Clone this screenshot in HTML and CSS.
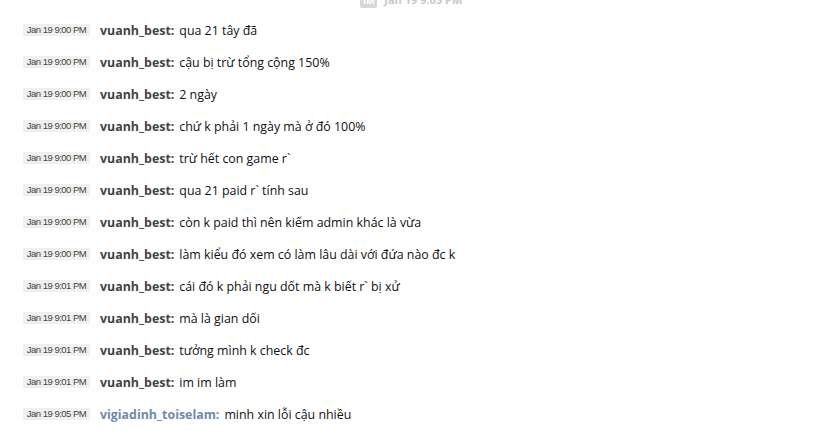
FILE: index.html
```html
<!DOCTYPE html>
<html>
    <head>
        <meta charset="utf-8">
        <link rel="stylesheet" href="styles.css">
    </head>
    <body>
        <div class='day-head'><span class='day-icon'>IM</span> Jan 19 9:05 PM</div>
        <div class='log'>
            <div class='line'><span class='stamp'>Jan 19 9:00 PM</span><span class='who'>vuanh_best:</span><span class='msg'>qua 21 tây đã</span></div>
            <div class='line'><span class='stamp'>Jan 19 9:00 PM</span><span class='who'>vuanh_best:</span><span class='msg'>cậu bị trừ tổng cộng 150%</span></div>
            <div class='line'><span class='stamp'>Jan 19 9:00 PM</span><span class='who'>vuanh_best:</span><span class='msg'>2 ngày</span></div>
            <div class='line'><span class='stamp'>Jan 19 9:00 PM</span><span class='who'>vuanh_best:</span><span class='msg'>chứ k phải 1 ngày mà ở đó 100%</span></div>
            <div class='line'><span class='stamp'>Jan 19 9:00 PM</span><span class='who'>vuanh_best:</span><span class='msg'>trừ hết con game r`</span></div>
            <div class='line'><span class='stamp'>Jan 19 9:00 PM</span><span class='who'>vuanh_best:</span><span class='msg'>qua 21 paid r` tính sau</span></div>
            <div class='line'><span class='stamp'>Jan 19 9:00 PM</span><span class='who'>vuanh_best:</span><span class='msg'>còn k paid thì nên kiếm admin khác là vừa</span></div>
            <div class='line'><span class='stamp'>Jan 19 9:00 PM</span><span class='who'>vuanh_best:</span><span class='msg'>làm kiểu đó xem có làm lâu dài với đứa nào đc k</span></div>
            <div class='line'><span class='stamp'>Jan 19 9:01 PM</span><span class='who'>vuanh_best:</span><span class='msg'>cái đó k phải ngu dốt mà k biết r` bị xử</span></div>
            <div class='line'><span class='stamp'>Jan 19 9:01 PM</span><span class='who'>vuanh_best:</span><span class='msg'>mà là gian dối</span></div>
            <div class='line'><span class='stamp'>Jan 19 9:01 PM</span><span class='who'>vuanh_best:</span><span class='msg'>tưởng mình k check đc</span></div>
            <div class='line'><span class='stamp'>Jan 19 9:01 PM</span><span class='who'>vuanh_best:</span><span class='msg'>im im làm</span></div>
            <div class='line'><span class='stamp'>Jan 19 9:05 PM</span><span class='who other'>vigiadinh_toiselam:</span><span class='msg'>minh xin lỗi cậu nhiều</span></div>
        </div>
    </body>
</html>
```

FILE: styles.css
```css
html {
    box-sizing: border-box;
}
*, *:before, *:after {
    box-sizing: inherit;
}

body {
    margin: 0;
    background-color: white;
    font-family: "Open Sans", "Noto Sans", sans-serif;
    color: #111;
    overflow: hidden;
}

.day-head {
    margin-top: -7px;
    height: 14px;
    padding-left: 360px;
    font-size: 11px;
    font-weight: bold;
    color: #c8c8c8;
    line-height: 14px;
}

.day-icon {
    display: inline-block;
    background-color: #d8d8d8;
    color: white;
    font-size: 9px;
    padding: 0 3px;
    margin-right: 4px;
    border-radius: 2px;
}

.log {
    padding-top: 7px;
}

.line {
    display: flex;
    align-items: center;
    height: 32px;
    padding-left: 23px;
    font-size: 12.4px;
}

.stamp {
    width: 67px;
    height: 12px;
    line-height: 12px;
    background-color: #f0f0f0;
    border-radius: 2px;
    color: #444;
    font-family: "Liberation Sans Narrow", "Liberation Sans", sans-serif;
    font-size: 9.5px;
    letter-spacing: -0.5px;
    text-align: center;
    margin-right: 10px;
}

.who {
    font-weight: bold;
    color: #444;
    margin-right: 5px;
}

.who.other {
    color: #6f8ba6;
}
```
